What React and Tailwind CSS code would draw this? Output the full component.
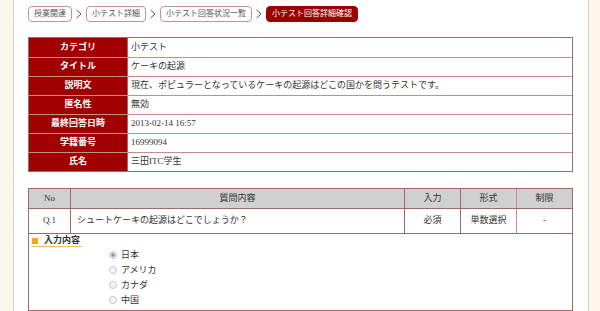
import React from 'react';

const crumbs = ['授業関連', '小テスト詳細', '小テスト回答状況一覧'];

const info = [
  ['カテゴリ', '小テスト'],
  ['タイトル', 'ケーキの起源'],
  ['説明文', '現在、ポピュラーとなっているケーキの起源はどこの国かを問うテストです。'],
  ['匿名性', '無効'],
  ['最終回答日時', '2013-02-14 16:57'],
  ['学籍番号', '16999094'],
  ['氏名', '三田ITC学生'],
];

const choices = ['日本', 'アメリカ', 'カナダ', '中国'];

function Chevron() {
  return (
    <svg width="8" height="10" viewBox="0 0 8 10" className="mx-[3px]">
      <polyline points="1.5,1 6,5 1.5,9" fill="none" stroke="#555" strokeWidth="1" />
    </svg>
  );
}

export default function App() {
  return (
    <div
      className="w-[600px] h-[311px] flex bg-[#fcf6ea] overflow-hidden text-[#333]"
      style={{ fontFamily: '"Liberation Serif", "Noto Sans CJK JP", serif' }}
    >
      <div className="w-[13px] shrink-0" />
      <div className="w-[576px] shrink-0 bg-white border-l border-r border-[#d8d2c8] pl-[14px] pt-[6px]">
        {/* Breadcrumb */}
        <div className="flex items-center h-[16px] text-[8px] leading-none">
          {crumbs.map((c) => (
            <React.Fragment key={c}>
              <span className="h-[16px] flex items-center px-[5px] border border-[#c89090] rounded-[4px] text-[#555] bg-white">
                {c}
              </span>
              <Chevron />
            </React.Fragment>
          ))}
          <span className="h-[16px] flex items-center px-[5px] rounded-[4px] bg-[#9b0000] text-white border border-[#9b0000]">
            小テスト回答詳細確認
          </span>
        </div>

        {/* Info table */}
        <div className="mt-[15px] w-[545px] border border-[#a06868] text-[9px]">
          {info.map(([k, v], i) => (
            <div
              key={k}
              className={`flex h-[19px] ${i > 0 ? 'border-t border-[#c98c8c]' : ''}`}
            >
              <div className="w-[98px] shrink-0 bg-[#a00000] text-white font-bold flex items-center justify-center">
                {k}
              </div>
              <div className="flex-1 flex items-center pl-[3px] border-l border-[#a06868]">{v}</div>
            </div>
          ))}
        </div>

        {/* Question table */}
        <div className="mt-[16px] w-[545px] border border-[#a06868] border-b-2 text-[9px]">
          <div className="flex h-[19px] bg-[#d0d0d0] text-[#333]">
            <div className="w-[42px] flex items-center justify-center border-r border-[#a06868]">No</div>
            <div className="w-[334px] flex items-center justify-center border-r border-[#a06868]">質問内容</div>
            <div className="w-[56px] flex items-center justify-center border-r border-[#a06868]">入力</div>
            <div className="w-[56px] flex items-center justify-center border-r border-[#c98c8c]">形式</div>
            <div className="flex-1 flex items-center justify-center">制限</div>
          </div>
          <div className="flex h-[25px] border-t border-[#a06868]">
            <div className="w-[42px] flex items-center justify-center border-r border-[#a06868]">Q.1</div>
            <div className="w-[334px] flex items-center pl-[6px] border-r border-[#a06868]">
              シュートケーキの起源はどこでしょうか？
            </div>
            <div className="w-[56px] flex items-center justify-center border-r border-[#a06868]">必須</div>
            <div className="w-[56px] flex items-center justify-center border-r border-[#c98c8c]">単数選択</div>
            <div className="flex-1 flex items-center justify-center">-</div>
          </div>
          <div className="border-t border-[#a06868] h-[77px] pl-[2px] pt-[1px] leading-none">
            <div className="flex items-center gap-[6px] w-[51px] h-[12px] border-b border-[#f0c060] pl-[1px]">
              <span className="w-[6px] h-[6px] bg-[#f4a81c]" />
              <span className="font-bold text-[#333]">入力内容</span>
            </div>
            <div className="pl-[78px] pt-[3px] flex flex-col gap-[5px]">
              {choices.map((c, i) => (
                <div key={c} className="flex items-center gap-[4px] h-[10px]">
                  <span className="w-[8px] h-[8px] rounded-full border border-[#c8c8c8] bg-[#f4f4f4] flex items-center justify-center">
                    {i === 0 && <span className="w-[4px] h-[4px] rounded-full bg-[#999]" />}
                  </span>
                  <span>{c}</span>
                </div>
              ))}
            </div>
          </div>
        </div>
      </div>
      <div className="flex-1" />
    </div>
  );
}
